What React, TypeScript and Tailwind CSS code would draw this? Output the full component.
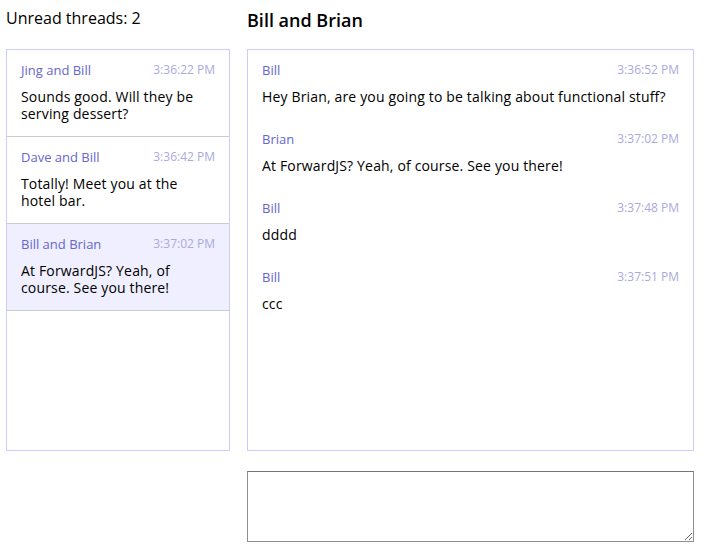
const threads = [
  { name: "Jing and Bill", time: "3:36:22 PM", last: "Sounds good. Will they be serving dessert?" },
  { name: "Dave and Bill", time: "3:36:42 PM", last: "Totally! Meet you at the hotel bar." },
  { name: "Bill and Brian", time: "3:37:02 PM", last: "At ForwardJS? Yeah, of course. See you there!", active: true },
];

const messages = [
  { author: "Bill", time: "3:36:52 PM", text: "Hey Brian, are you going to be talking about functional stuff?" },
  { author: "Brian", time: "3:37:02 PM", text: "At ForwardJS? Yeah, of course. See you there!" },
  { author: "Bill", time: "3:37:48 PM", text: "dddd" },
  { author: "Bill", time: "3:37:51 PM", text: "ccc" },
];

export default function App() {
  return (
    <div className="flex pl-[6px] pr-[10px] bg-white text-black font-['Open_Sans',_'Noto_Sans',_sans-serif]">
      {/* threads */}
      <div className="w-[224px] shrink-0">
        <div className="h-[49px] pt-[9px] text-[16px] leading-[19px]">Unread threads: 2</div>
        <ul className="h-[402px] border border-[#ccf] overflow-y-auto">
          {threads.map((t) => (
            <li
              key={t.name}
              className={`px-[14px] pt-[12px] pb-[14px] border-b border-[#ccc] ${t.active ? "bg-[#efefff]" : ""}`}
            >
              <div className="flex justify-between items-start h-[16px]">
                <span className="text-[13px] leading-[16px] font-medium text-[#66c]">{t.name}</span>
                <span className="text-[12px] leading-[16px] font-medium text-[#aad]">{t.time}</span>
              </div>
              <div className="pt-[10px] text-[14px] leading-[17px] tracking-[0.16px]">{t.last}</div>
            </li>
          ))}
        </ul>
      </div>

      {/* messages */}
      <div className="flex-1 ml-[17px]">
        <h3 className="h-[49px] pt-[9px] text-[18px] leading-[22px] font-semibold">Bill and Brian</h3>
        <ul className="h-[402px] border border-[#ccf] overflow-y-auto">
          {messages.map((m) => (
            <li key={m.time} className="px-[14px] pt-[12px] pb-[14px]">
              <div className="flex justify-between items-start h-[16px]">
                <span className="text-[13px] leading-[16px] font-medium text-[#66c]">{m.author}</span>
                <span className="text-[12px] leading-[16px] font-medium text-[#aad]">{m.time}</span>
              </div>
              <div className="pt-[10px] text-[14px] leading-[17px] tracking-[0.16px]">{m.text}</div>
            </li>
          ))}
        </ul>
        <textarea className="block w-full h-[71px] mt-[20px] p-[10px] text-[14px] border border-[#8f8f8f] border-t-[#767676] resize-y font-[inherit]" />
      </div>
    </div>
  );
}
